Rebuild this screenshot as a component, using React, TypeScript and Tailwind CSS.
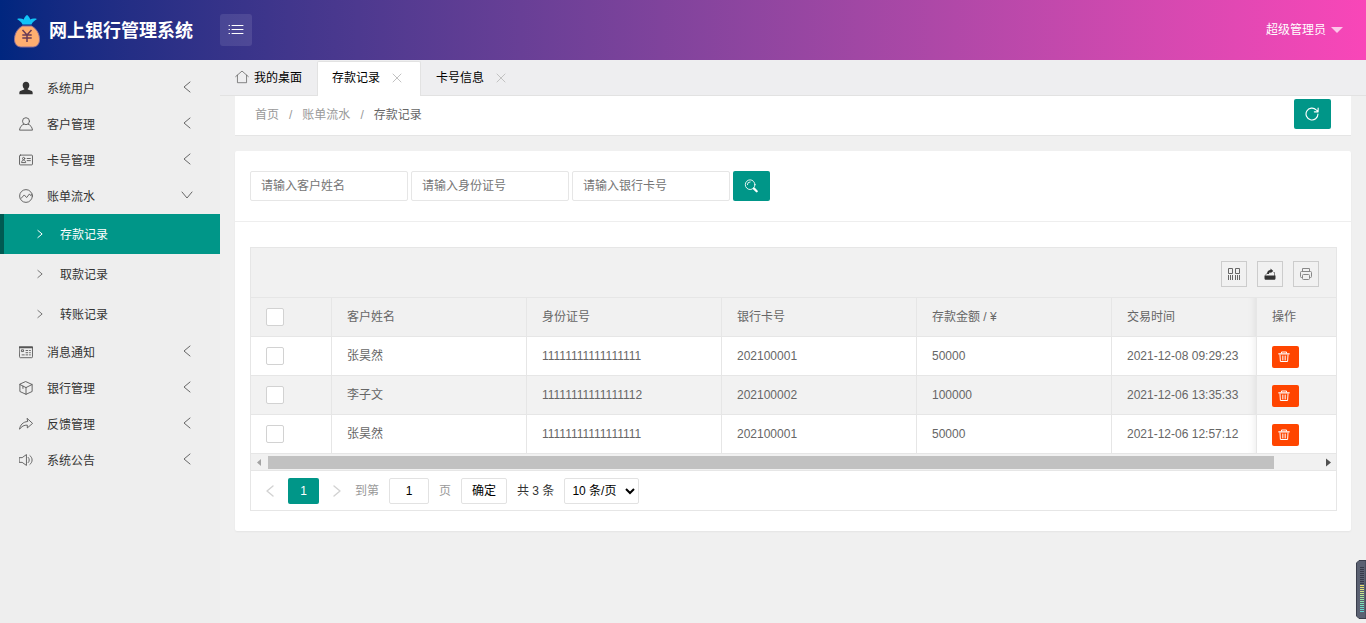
import { useState, type ReactNode, type SVGProps } from "react";

type IconProps = SVGProps<SVGSVGElement>;

function Icon({ children, ...props }: IconProps & { children: ReactNode }) {
  return (
    <svg
      viewBox="0 0 16 16"
      width="14"
      height="14"
      fill="none"
      stroke="currentColor"
      strokeLinecap="round"
      strokeLinejoin="round"
      aria-hidden="true"
      {...props}
    >
      {children}
    </svg>
  );
}

const UserSolidIcon = () => (
  <Icon fill="#333" stroke="none">
    <path d="M8 .8c2.300 0 3.800 1.700 3.800 4 0 1.700-.7 3.200-1.800 4.100v.7l4 1.600c1.100.4 1.600 1.200 1.600 2.300v1.500H.4v-1.500c0-1.100.5-1.900 1.600-2.300l4-1.600v-.7C4.900 8 4.200 6.500 4.200 4.800c0-2.300 1.500-4 3.800-4z" />
  </Icon>
);

const UserIcon = () => (
  <Icon>
    <circle cx="8" cy="4.800" r="4" />
    <path d="M5.500 8.200C2.800 9.200 1 11.500.6 15h14.800c-.4-3.500-2.200-5.800-4.900-6.800" />
  </Icon>
);

const CardIcon = () => (
  <Icon>
    <rect x=".6" y="2.400" width="14.800" height="11.200" rx="1" />
    <circle cx="5.300" cy="6.300" r="1.300" />
    <path d="M3 10.500c.2-1.500 1.100-2.500 2.300-2.500s2.100 1 2.300 2.500zM9.300 6.300h3.700M9.300 8.700h3.700" />
  </Icon>
);

const ChartIcon = () => (
  <Icon>
    <circle cx="8" cy="8" r="7.300" />
    <path d="M2.300 10.800l3.700-4 2.700 3 3.300-4.200 1.200 1.800 1.800-1.200" />
  </Icon>
);

const NoticeIcon = () => (
  <Icon>
    <path d="M.6 2h14.800v11.500a1 1 0 0 1-1 1H1.600a1 1 0 0 1-1-1z" />
    <path d="M.8 2.800h14.400" strokeWidth="1.800" />
    <rect x="3.200" y="5.500" width="2" height="2" />
    <path d="M8 6.300h2M12 6.300h1M8 8.800h2M12 8.800h1M3.500 11.300h2.500M8 11.300h2M12 11.300h1" />
  </Icon>
);

const CubeIcon = () => (
  <Icon>
    <path d="M8 .8l7 3.200v8L8 15.200 1 12V4zM1 4l7 3.500L15 4M8 7.500v7.700M4.500 6v2.500" />
  </Icon>
);

const ShareIcon = () => (
  <Icon>
    <path d="M9.500 1.800l6 5.500-6 5.200V9.300C6 9.100 3 10.500.6 14c.6-4.700 3.900-8.500 8.900-8.800z" />
  </Icon>
);

const SpeakerIcon = () => (
  <Icon>
    <path d="M.6 5.300h3L8.500 1.800v12.400l-4.900-3.500h-3zM10.500 5c1.700 1.500 1.700 4.500 0 6M12.500 3c3.400 2.600 3.400 7.400 0 10" />
  </Icon>
);

const HomeIcon = () => (
  <Icon strokeWidth="0.900">
    <path d="M.8 7.500L8 1.200l7.200 6.300M2.800 6v8.500h10.400V6" />
  </Icon>
);

const ChevronIcon = (props: IconProps) => (
  <Icon width="12" height="14" viewBox="0 0 12 14" {...props}>
    <path d="M9 2L3 7l6 5" />
  </Icon>
);

const CloseIcon = () => (
  <Icon width="10" height="10" viewBox="0 0 10 10">
    <path d="M1 1l8 8M9 1L1 9" />
  </Icon>
);

const TrashIcon = () => (
  <Icon width="12" height="12" viewBox="0 0 12 12">
    <path d="M3.500 2V1h5v1" />
    <path d="M.8 2.800h10.400" strokeWidth="1.300" />
    <path d="M2 4l.4 6.500h7.200L10 4" />
    <path d="M4.500 5v4M6 5v4M7.500 5v4" strokeWidth="0.700" />
  </Icon>
);

function MoneyBag() {
  return (
    <svg viewBox="0 0 28 34" width="28" height="34" aria-hidden="true">
      <path
        d="M9.500 12C4 15 1.500 20 1.500 25.500c0 5 3 7.500 7 7.500h11c4 0 7-2.500 7-7.500 0-5.500-2.500-10.500-8-13.500z"
        fill="#ffae70"
        stroke="#8f6f98"
        strokeWidth="1"
      />
      <path
        d="M9.500 10.500C8.500 8 6.500 6.500 4 5c2.500-.8 5-.6 6.800.5C11.200 3.500 12.500 2 14 1c1.500 1 2.800 2.500 3.200 4.500C19 4.400 21.500 4.200 24 5c-2.500 1.500-4.500 3-5.500 5.500z"
        fill="#12c4f8"
      />
      <path
        d="M9.500 16l4.500 5 4.500-5M9.300 21h9.400M9.300 24h9.400M14 21v7"
        fill="none"
        stroke="#693b55"
        strokeWidth="1.500"
      />
    </svg>
  );
}

type MenuItem = {
  label: string;
  icon: ReactNode;
  children?: string[];
};

const menu: MenuItem[] = [
  { label: "系统用户", icon: <UserSolidIcon /> },
  { label: "客户管理", icon: <UserIcon /> },
  { label: "卡号管理", icon: <CardIcon /> },
  { label: "账单流水", icon: <ChartIcon />, children: ["存款记录", "取款记录", "转账记录"] },
  { label: "消息通知", icon: <NoticeIcon /> },
  { label: "银行管理", icon: <CubeIcon /> },
  { label: "反馈管理", icon: <ShareIcon /> },
  { label: "系统公告", icon: <SpeakerIcon /> },
];

const records = [
  { name: "张昊然", idNo: "11111111111111111", card: "202100001", amount: "50000", time: "2021-12-08 09:29:23" },
  { name: "李子文", idNo: "11111111111111112", card: "202100002", amount: "100000", time: "2021-12-06 13:35:33" },
  { name: "张昊然", idNo: "11111111111111111", card: "202100001", amount: "50000", time: "2021-12-06 12:57:12" },
];

function Header() {
  return (
    <header className="flex h-[60px] items-center bg-linear-to-r from-[#00267f] to-[#f946b8] text-white">
      <a href="#" className="flex w-[220px] items-center gap-2 pt-0.5 pl-[13px]">
        <MoneyBag />
        <span className="text-lg font-bold">网上银行管理系统</span>
      </a>
      <button
        type="button"
        aria-label="切换菜单"
        className="flex size-8 items-center justify-center rounded-[3px] bg-white/10"
      >
        <Icon width="16" height="16">
          <path d="M4 3.500h11M4 7.500h11M4 11.500h11M1 3.500h.5M1 7.500h.5M1 11.500h.5" />
        </Icon>
      </button>
      <button type="button" className="mr-[23px] ml-auto flex items-center gap-[5px]">
        超级管理员
        <svg viewBox="0 0 12 6" width="12" height="6" className="text-white/70" aria-hidden="true">
          <path d="M0 0h12L6 6z" fill="currentColor" />
        </svg>
      </button>
    </header>
  );
}

function Sidebar() {
  const [active, setActive] = useState("存款记录");

  return (
    <nav className="w-[220px] shrink-0 bg-[#eeeeee] pt-2.5 text-[#333]">
      <ul>
        {menu.map((item) => (
          <li key={item.label}>
            <button type="button" className="flex h-9 w-full items-center pr-[27px] pl-[19px] text-left">
              <span className="text-[#555]">{item.icon}</span>
              <span className="ml-3.5 flex-1 pt-0.5">{item.label}</span>
              <ChevronIcon
                className={item.children ? "mb-0.5 -rotate-90 text-[#666]" : "mb-0.5 text-[#666]"}
              />
            </button>
            {item.children && (
              <ul>
                {item.children.map((child) => (
                  <li key={child}>
                    <a
                      href="#"
                      onClick={() => setActive(child)}
                      className={
                        child === active
                          ? "flex h-10 items-center gap-3.5 border-l-4 border-[#005a52] bg-[#009688] pl-[30px] text-white"
                          : "flex h-10 items-center gap-3.5 border-l-4 border-transparent pl-[30px]"
                      }
                    >
                      <ChevronIcon
                        height="10"
                        strokeWidth="1.400"
                        className={child === active ? "rotate-180" : "rotate-180 text-[#777]"}
                      />
                      <span className="pt-0.5">{child}</span>
                    </a>
                  </li>
                ))}
              </ul>
            )}
          </li>
        ))}
      </ul>
    </nav>
  );
}

function Tabs() {
  return (
    <div className="flex h-9 border-b border-[#e2e2e2] bg-[#eeeef0] text-black">
      <button type="button" className="flex items-center gap-[5px] px-[15px]">
        <span className="pb-0.5 text-[#666]">
          <HomeIcon />
        </span>
        我的桌面
      </button>
      <div className="mt-px -mb-px flex items-center gap-3 rounded-t-[2px] border-x border-t border-[#e2e2e2] bg-white pr-[18px] pb-0.5 pl-3.5">
        <button type="button">存款记录</button>
        <button type="button" aria-label="关闭存款记录" className="text-[#c2c2c2]">
          <CloseIcon />
        </button>
      </div>
      <div className="flex items-center gap-3 px-[15px]">
        <button type="button">卡号信息</button>
        <button type="button" aria-label="关闭卡号信息" className="text-[#c2c2c2]">
          <CloseIcon />
        </button>
      </div>
    </div>
  );
}

function Breadcrumb() {
  return (
    <div className="mx-[15px] flex items-center justify-between border-b border-[#e5e5e5] bg-white pt-[3px] pr-5 pb-1.5 pl-5">
      <nav className="flex gap-2.5 pt-0.5 text-[#999]">
        <a href="#">首页</a>
        <span>/</span>
        <a href="#">账单流水</a>
        <span>/</span>
        <a href="#" className="text-[#666]">
          存款记录
        </a>
      </nav>
      <button
        type="button"
        aria-label="刷新"
        className="flex h-[30px] w-[37px] items-center justify-center rounded-[2px] bg-[#009688] pr-0.5 text-white"
      >
        <Icon strokeWidth="1.300">
          <path d="M14.800 8a6.800 6.800 0 1 1-2-4.800L14.800 5M15 1.200V5.500h-4.300" />
        </Icon>
      </button>
    </div>
  );
}

function SearchForm() {
  return (
    <form className="flex gap-[3px] border-b border-[#eeeeee] px-[15px] py-5">
      {["请输入客户姓名", "请输入身份证号", "请输入银行卡号"].map((hint) => (
        <input
          key={hint}
          type="text"
          placeholder={hint}
          aria-label={hint}
          className="h-[30px] w-[158px] rounded-[2px] border border-[#e6e6e6] bg-white pl-2.5 placeholder:text-[#757575]"
        />
      ))}
      <button
        type="button"
        aria-label="搜索"
        className="flex h-[30px] w-[37px] items-center justify-center rounded-[2px] bg-[#009688] pr-0.5 text-white"
      >
        <Icon>
          <circle cx="7" cy="6.500" r="5.500" />
          <path d="M3.800 6.500A3.200 3.200 0 0 1 7 3.300" />
          <path d="M11.500 11l3 3" strokeWidth="2.500" />
        </Icon>
      </button>
    </form>
  );
}

const toolClass = "flex size-[26px] items-center justify-center border border-[#cccccc] text-[#333]";

function TableToolbar() {
  return (
    <div className="flex h-[50px] items-center justify-end gap-2.5 border-b border-[#e6e6e6] bg-[#f1f1f1] pt-[3px] pr-[17px]">
      <button type="button" aria-label="筛选列" className={toolClass}>
        <svg viewBox="0 0 12 12" width="12" height="12" fill="none" stroke="#666" aria-hidden="true">
          <path d="M.5.5h4v5h-4zM7.500.5h4v5h-4zM.5 7v5M2.500 7v5M4.500 7v5M7.500 7v5M9.500 7v5M11.500 7v5" />
        </svg>
      </button>
      <button type="button" aria-label="导出" className={toolClass}>
        <svg viewBox="0 0 12 12" width="12" height="12" fill="currentColor" aria-hidden="true">
          <path d="M.5 7.500h11v2.700c0 1-.6 1.500-1.500 1.500H2c-.9 0-1.500-.5-1.500-1.500z" />
          <path d="M3 6c0-2.500 1.500-4 3.500-4V.5L9.300 3 6.500 5.300V4.200C5.500 4.200 5 5 5 6z" />
          <path d="M1.500 7.500l1-2M9.500 4.500h1V8" fill="none" stroke="currentColor" strokeWidth="0.600" />
        </svg>
      </button>
      <button type="button" aria-label="打印" className={toolClass}>
        <svg viewBox="0 0 12 12" width="12" height="12" fill="none" stroke="#888" aria-hidden="true">
          <path d="M2.500 3.500v-3h7v3M2.500 9.500H1.500a1 1 0 0 1-1-1v-4a1 1 0 0 1 1-1h9a1 1 0 0 1 1 1v4a1 1 0 0 1-1 1h-1" />
          <rect x="2.500" y="6.500" width="7" height="5" rx="1" />
        </svg>
      </button>
    </div>
  );
}

const cellClass = "h-[39px] border-r border-b border-[#e6e6e6] pr-3 pl-[15px] text-left font-normal";
const timeClass =
  "h-[39px] border-b border-[#e6e6e6] pl-[15px] text-left font-normal whitespace-nowrap shadow-[inset_-8px_0_8px_-8px_rgba(0,0,0,0.1)]";
const actionClass = "h-[39px] border-b border-l border-[#e6e6e6] pl-[15px] text-left font-normal";
const checkboxClass =
  "block size-[18px] appearance-none rounded-[2px] border border-[#d2d2d2] bg-white checked:border-[#009688] checked:bg-[#009688]";

function RecordTable() {
  return (
    <table className="w-full table-fixed border-separate border-spacing-0">
      <colgroup>
        <col className="w-[81px]" />
        <col className="w-[195px]" />
        <col className="w-[195px]" />
        <col className="w-[195px]" />
        <col className="w-[195px]" />
        <col />
        <col className="w-[80px]" />
      </colgroup>
      <thead className="bg-[#f1f1f1]">
        <tr>
          <th className={cellClass}>
            <input type="checkbox" aria-label="全选" className={checkboxClass} />
          </th>
          <th className={cellClass}>客户姓名</th>
          <th className={cellClass}>身份证号</th>
          <th className={cellClass}>银行卡号</th>
          <th className={cellClass}>存款金额 / ¥</th>
          <th className={timeClass}>交易时间</th>
          <th className={actionClass}>操作</th>
        </tr>
      </thead>
      <tbody>
        {records.map((row) => (
          <tr key={row.time} className="even:bg-[#f2f2f2]">
            <td className={cellClass}>
              <input type="checkbox" aria-label={`选择 ${row.name}`} className={checkboxClass} />
            </td>
            <td className={cellClass}>{row.name}</td>
            <td className={cellClass}>{row.idNo}</td>
            <td className={cellClass}>{row.card}</td>
            <td className={cellClass}>{row.amount}</td>
            <td className={timeClass}>{row.time}</td>
            <td className={`${actionClass} pt-0.5`}>
              <button
                type="button"
                aria-label="删除"
                className="flex h-[22px] w-[27px] items-center rounded-[2px] bg-[#ff4500] pl-1.5 text-white"
              >
                <TrashIcon />
              </button>
            </td>
          </tr>
        ))}
      </tbody>
    </table>
  );
}

function ScrollTrack() {
  return (
    <div className="flex h-[17px] items-center border-b border-[#e6e6e6] bg-[#f1f1f1]">
      <svg viewBox="0 0 17 17" width="17" height="17" aria-hidden="true">
        <path d="M10 5v7L6 8.500z" fill="#a3a3a3" />
      </svg>
      <div className="flex-1">
        <div className="h-[13px] w-[95.700%] bg-[#c1c1c1]" />
      </div>
      <svg viewBox="0 0 17 17" width="17" height="17" aria-hidden="true">
        <path d="M7 4.500v8l5-4z" fill="#505050" />
      </svg>
    </div>
  );
}

function Pagination() {
  return (
    <div className="flex h-[39px] items-center pl-[13px] text-[#333]">
      <button type="button" aria-label="上一页" className="mr-3 text-[#d2d2d2]">
        <ChevronIcon strokeWidth="1.400" />
      </button>
      <button type="button" className="h-[26px] w-[31px] rounded-[2px] bg-[#009688] text-white">
        1
      </button>
      <button type="button" aria-label="下一页" className="mx-3 text-[#d2d2d2]">
        <ChevronIcon strokeWidth="1.400" className="rotate-180" />
      </button>
      <label className="flex items-center gap-2.5 text-[#999]">
        到第
        <input
          type="text"
          defaultValue="1"
          className="h-[26px] w-10 rounded-[2px] border border-[#e2e2e2] bg-white text-center text-black"
        />
        页
      </label>
      <button
        type="button"
        className="mx-2.5 h-[26px] w-[46px] rounded-[2px] border border-[#e2e2e2] bg-white text-black"
      >
        确定
      </button>
      <span>共 3 条</span>
      <select
        aria-label="每页条数"
        className="ml-2.5 h-[26px] w-[75px] rounded-[2px] border border-[#e2e2e2] bg-white pl-[3px] text-black"
      >
        <option>10 条/页</option>
        <option>20 条/页</option>
        <option>30 条/页</option>
      </select>
    </div>
  );
}

const meterColors = [
  "#363a48", "#363a48", "#363a48", "#363a48", "#363a48", "#363a48", "#363a48", "#363a48", "#363a48",
  "#eadf6e", "#e8e273", "#dfe37c", "#d2e485", "#c4e58d", "#b5e695", "#a5e69d", "#97e5a5", "#8ae4ad",
  "#7ee2b5", "#74e0bd", "#6cddc5", "#66dacc", "#62d7d2",
];

// level meter docked to the right edge of the window
function Meter() {
  return (
    <svg viewBox="0 0 10 59" width="10" height="59" className="fixed right-0 bottom-1" aria-hidden="true">
      <path d="M10 .5H3L.5 3v53L3 58.500h7z" fill="#5b6172" stroke="#3a3e4c" />
      {meterColors.map((color, i) => (
        <rect key={i} x="4" y={7 + i * 2} width="4" height="1" fill={color} />
      ))}
    </svg>
  );
}

export default function App() {
  return (
    <div className="flex min-h-screen flex-col bg-[#f0f0f0] font-['Liberation_Sans','Noto_Sans_CJK_SC',sans-serif] text-xs text-[#666]">
      <Header />
      <div className="flex flex-1">
        <Sidebar />
        <main className="min-w-0 flex-1">
          <Tabs />
          <Breadcrumb />
          <section className="m-[15px] rounded-[2px] bg-white shadow-[0_1px_2px_rgba(0,0,0,0.05)]">
            <SearchForm />
            <div className="pt-[25px] pr-3.5 pb-5 pl-[15px]">
              <div className="border border-[#e6e6e6]">
                <TableToolbar />
                <RecordTable />
                <ScrollTrack />
                <Pagination />
              </div>
            </div>
          </section>
        </main>
      </div>
      <Meter />
    </div>
  );
}
